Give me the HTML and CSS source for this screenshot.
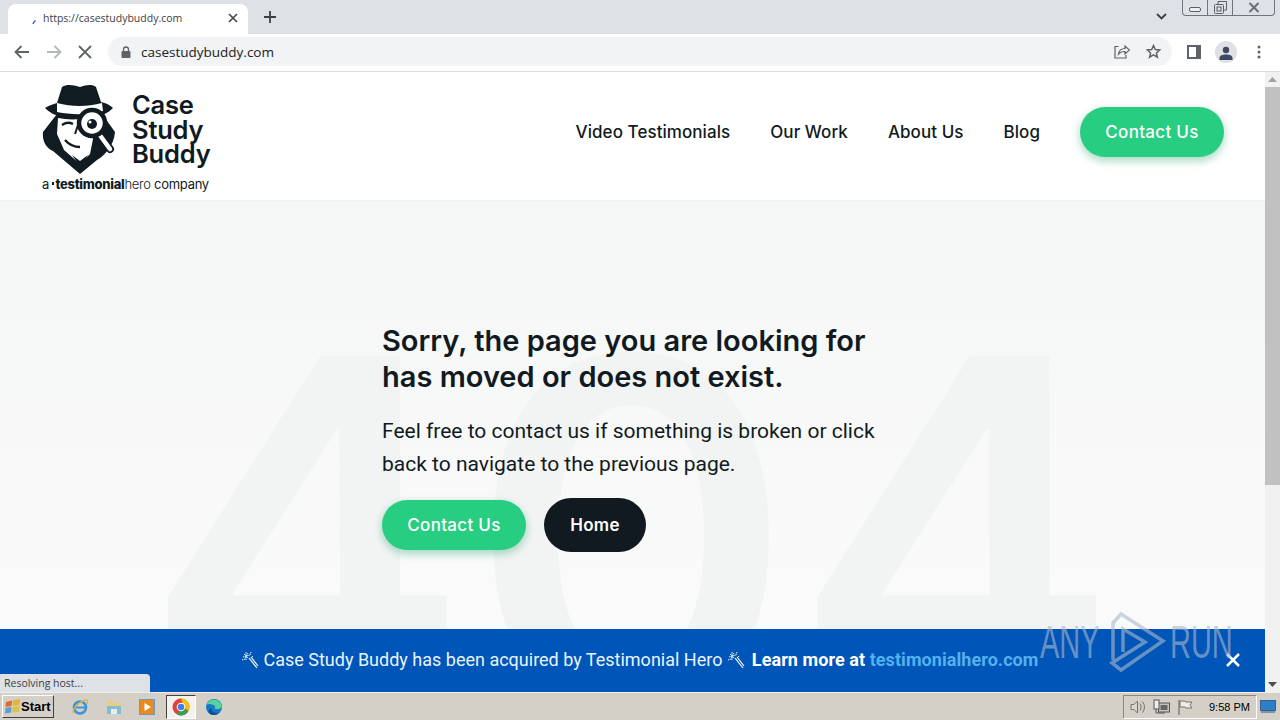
FILE: index.html
```html
<!DOCTYPE html>
<html lang="en">
<head>
    <meta charset="UTF-8">
    <meta name="viewport" content="width=device-width, initial-scale=1.0">
    <title>Case Study Buddy</title>
    <link rel="stylesheet" href="styles.css">
</head>
<body>
<div class="desktop">
    <!-- browser tabs -->
    <div class="tabstrip">
        <div class="tab">
            <svg class="tab-spinner" width="6" height="6" viewBox="0 0 6 6"><path d="M1 5 Q1.500 3 3.500 1.500" fill="none" stroke="#1a5fd0" stroke-width="1.300"/></svg>
            <span class="tab-title">https://casestudybuddy.com</span>
            <svg class="tab-close" width="10" height="10" viewBox="0 0 10 10"><path d="M1 1 9 9M9 1 1 9" stroke="#45484c" stroke-width="1.700"/></svg>
        </div>
        <svg class="new-tab" width="12" height="12" viewBox="0 0 12 12"><path d="M6 0v12M0 6h12" stroke="#3c4043" stroke-width="1.800"/></svg>
        <div class="strip-right">
            <svg class="tab-list" width="11" height="7" viewBox="0 0 11 7"><path d="M1 1 5.500 5.500 10 1" fill="none" stroke="#3c4043" stroke-width="1.800"/></svg>
            <div class="win-controls">
                <div class="win-btn win-min"><svg width="12" height="5" viewBox="0 0 12 5"><rect x=".5" y=".5" width="11" height="4" rx="1.500" fill="#eef0f3" stroke="#5b5f66"/></svg></div>
                <div class="win-btn win-max"><svg width="13" height="13" viewBox="0 0 13 13"><path d="M4 3V.5h8.500V9H10" fill="none" stroke="#5b5f66"/><rect x=".5" y="3.500" width="9" height="9" rx="1" fill="none" stroke="#5b5f66"/><rect x="3" y="6" width="4" height="4" fill="none" stroke="#5b5f66"/></svg></div>
                <div class="win-btn win-close"><svg width="12" height="11" viewBox="0 0 12 11"><path d="M1.500 1 10.500 10M10.500 1 1.500 10" stroke="#6a6e75" stroke-width="2"/></svg></div>
            </div>
        </div>
    </div>

    <!-- browser toolbar -->
    <div class="toolbar">
        <svg width="16" height="14" viewBox="0 0 16 14"><path d="M15 7H2M7.500 1 1.500 7l6 6" fill="none" stroke="#5f6368" stroke-width="1.800"/></svg>
        <svg width="16" height="14" viewBox="0 0 16 14"><path d="M1 7h13M8.500 1l6 6-6 6" fill="none" stroke="#b4b7bb" stroke-width="1.800"/></svg>
        <svg width="14" height="14" viewBox="0 0 14 14"><path d="M1 1 13 13M13 1 1 13" stroke="#5f6368" stroke-width="1.800"/></svg>
        <div class="omnibox">
            <svg width="10" height="12" viewBox="0 0 10 12"><path d="M2.500 5V3.500a2.500 2.500 0 0 1 5 0V5" fill="none" stroke="#5f6368" stroke-width="1.300"/><rect x="0.500" y="5" width="9" height="7" rx="1" fill="#5f6368"/></svg>
            <span class="omni-url">casestudybuddy.com</span>
            <div class="omni-actions">
                <svg width="16" height="15" viewBox="0 0 16 15"><path d="M4.500 2.500H1v11.500h11v-3M4.500 10c.5-3.500 3-5.500 6.500-5.500V2l4.500 4-4.500 4V7.500c-3 0-5 .8-6.500 2.500z" fill="none" stroke="#5f6368" stroke-width="1.200"/></svg>
                <svg width="15" height="15" viewBox="0 0 15 15"><path d="M7.500 1.500 9.300 5.600l4.400.4-3.300 2.900 1 4.300-3.900-2.300-3.900 2.300 1-4.300L1.300 6l4.400-.4z" fill="none" stroke="#5f6368" stroke-width="1.500"/></svg>
            </div>
        </div>
        <div class="toolbar-right">
            <svg width="14" height="14" viewBox="0 0 14 14"><rect x="1" y="1" width="12" height="12" fill="none" stroke="#5f6368" stroke-width="2"/><rect x="9" y="1" width="4" height="12" fill="#5f6368"/></svg>
            <div class="avatar"><svg width="14" height="14" viewBox="0 0 14 14"><circle cx="7" cy="4" r="3.200" fill="#3e4a63"/><path d="M0.500 14v-2c0-2.500 3-3.500 6.500-3.500s6.500 1 6.500 3.500v2z" fill="#3e4a63"/></svg></div>
            <svg class="menu-dots" width="4" height="14" viewBox="0 0 4 14"><circle cx="2" cy="2" r="1.500" fill="#5f6368"/><circle cx="2" cy="7" r="1.500" fill="#5f6368"/><circle cx="2" cy="12" r="1.500" fill="#5f6368"/></svg>
        </div>
    </div>

    <div class="viewport">
        <div class="page">
            <header class="site-header">
                <a class="logo">
                    <div class="logo-top">
                        <svg class="logo-mark" width="76" height="92" viewBox="0 0 76 92">
                            <!-- coat -->
                            <path d="M15 30 1 48C0 57 4 64 11 67L38 90 55 76C62 72 72 62 73 48L60 30Z" fill="#111b22"/>
                            <!-- hat -->
                            <path d="M3 24C8 21 12 20 15 19L20 3C25 0 31 1 38 3 44 1 50 0 54 3L59 18C64 19 68 21 71 24 66 29 60 32 52 33H22C13 32 7 28 3 24Z" fill="#111b22"/>
                            <path d="M15 19C30 23 45 23 60 19L61 27C46 31 30 31 15 28Z" fill="#fff"/>
                            <!-- face -->
                            <path d="M16 34C26 36 38 36 48 33L51 55 48 70 38 80 22 66 15 50Z" fill="#fff"/>
                            <path d="M20 41q5-4 11-1" fill="none" stroke="#111b22" stroke-width="2.400"/>
                            <path d="M23 56q6 7 15 7" fill="none" stroke="#111b22" stroke-width="2.400"/>
                            <path d="M33 50 36 41" fill="none" stroke="#111b22" stroke-width="2"/>
                            <path d="M30 71 38 77 46 71 41 80 38 82Z" fill="#111b22"/>
                            <!-- magnifier -->
                            <path d="M57 50 68 65" stroke="#111b22" stroke-width="8" stroke-linecap="round"/>
                            <path d="M57 50 68 65" stroke="#fff" stroke-width="4.500" stroke-linecap="round"/>
                            <circle cx="50" cy="39" r="13" fill="#fff" stroke="#111b22" stroke-width="4.500"/>
                            <circle cx="50" cy="40" r="5" fill="#111b22"/>
                            <circle cx="48" cy="38" r="1.500" fill="#fff"/>
                        </svg>
                        <div class="logo-name">Case<br>Study<br>Buddy</div>
                    </div>
                    <div class="logo-tag">a <span class="logo-tick"></span><b>testimonial</b><span class="logo-hero">hero</span> company</div>
                </a>
                <nav class="site-nav">
                    <a>Video Testimonials</a>
                    <a>Our Work</a>
                    <a>About Us</a>
                    <a>Blog</a>
                    <a class="btn btn-green nav-cta">Contact Us</a>
                </nav>
            </header>

            <main class="not-found">
                <div class="big-404" aria-hidden="true">404</div>
                <div class="message">
                    <h1>Sorry, the page you are looking for has moved or does not exist.</h1>
                    <p>Feel free to contact us if something is broken or click back to navigate to the previous page.</p>
                    <div class="actions">
                        <a class="btn btn-green">Contact Us</a>
                        <a class="btn btn-dark">Home</a>
                    </div>
                </div>
            </main>

            <div class="banner">
                <span class="banner-text"><svg class="wand" width="18" height="18" viewBox="0 0 18 18"><path d="M8 7 16 17M10 6 17 15" stroke="#fff" stroke-width="1.200"/><path d="M3 3 7 7M7 2 4 8M2 6 9 4M5 1v8M10 1 9 4M1 9 4 8M12 5 10 7" stroke="#eef5ff" stroke-width="1" stroke-dasharray="1.500 .7"/></svg> Case Study Buddy has been acquired by Testimonial Hero <svg class="wand" width="18" height="18" viewBox="0 0 18 18"><path d="M8 7 16 17M10 6 17 15" stroke="#fff" stroke-width="1.200"/><path d="M3 3 7 7M7 2 4 8M2 6 9 4M5 1v8M10 1 9 4M1 9 4 8M12 5 10 7" stroke="#eef5ff" stroke-width="1" stroke-dasharray="1.500 .7"/></svg>&nbsp; <b>Learn more at <span class="banner-link">testimonialhero.com</span></b></span>
                <svg class="banner-close" width="16" height="16" viewBox="0 0 16 16"><path d="M2 2 14 14M14 2 2 14" stroke="#fff" stroke-width="2.500"/></svg>
            </div>

            <div class="status-bubble">Resolving host...</div>
        </div>

        <div class="scrollbar">
            <div class="scroll-arrow"><svg width="9" height="5" viewBox="0 0 9 5"><path d="M4.500 0 9 5H0z" fill="#a3a3a3"/></svg></div>
            <div class="scroll-track"><div class="scroll-thumb"></div></div>
            <div class="scroll-arrow"><svg width="9" height="5" viewBox="0 0 9 5"><path d="M0 0h9L4.500 5z" fill="#505050"/></svg></div>
        </div>
    </div>

    <!-- windows taskbar -->
    <div class="taskbar">
        <div class="start-btn">
            <svg width="16" height="15" viewBox="0 0 16 15"><path d="M1 3 7 1.500 6.500 7 .5 8z" fill="#e4672a"/><path d="M8 1.300 15 0 14.500 6 7.500 7z" fill="#e8b23a"/><path d="M.5 9 6.500 8 6 13.500 0 14.500z" fill="#5a9bd8"/><path d="M7.500 8 14.500 7 14 13 7 13.500z" fill="#d8c24a"/></svg>
            <span>Start</span>
        </div>
        <div class="quick-launch">
            <div class="task-icon"><svg width="18" height="18" viewBox="0 0 18 18"><circle cx="9" cy="9.500" r="6" fill="none" stroke="#3d94d8" stroke-width="2.600"/><path d="M4 9.500h10" stroke="#3d94d8" stroke-width="2"/><path d="M2 15C1 12 8 3 15 2c2 0 2 2 1 4" fill="none" stroke="#e3b341" stroke-width="1.300"/></svg></div>
            <div class="task-icon"><svg width="18" height="18" viewBox="0 0 18 18"><path d="M2 3h5l1 2h8v11H2z" fill="#e8cf7e"/><path d="M2 8h14v8H2z" fill="#85bdd0"/><rect x="6" y="11" width="6" height="5" fill="#e6eef0"/></svg></div>
            <div class="task-icon"><svg width="16" height="16" viewBox="0 0 16 16"><rect x=".5" y=".5" width="15" height="15" fill="#e88a1f" stroke="#6c9ac4"/><path d="M5.500 4 12 8l-6.500 4z" fill="#fff"/></svg></div>
            <div class="task-icon task-active"><svg width="18" height="18" viewBox="0 0 18 18"><circle cx="9" cy="9" r="8.500" fill="#e0433a"/><path d="M9 9 16.400 13.300A8.500 8.500 0 0 1 5 16.500z" fill="#37a04f"/><path d="M9 .5A8.500 8.500 0 0 1 16.400 13.300L12 9z" fill="#f6c20d"/><circle cx="9" cy="9" r="4.300" fill="#fff"/><circle cx="9" cy="9" r="3.300" fill="#3f7fe8"/></svg></div>
            <div class="task-icon"><svg width="18" height="18" viewBox="0 0 18 18"><circle cx="9" cy="9" r="8" fill="#1478c8"/><path d="M1.500 7C3 1 14 -1 16.800 8c.3 2.500-3 3.500-6 3-1.800-.3-1-2-.3-2.500C8 6 3.500 5 1.500 7z" fill="#57d29a"/><path d="M6 10c0 3 4 6 8 4.500-3 3.500-8 3-10 .5C3 13 4 11 6 10z" fill="#0c4f96"/></svg></div>
        </div>
        <div class="tray">
            <svg width="16" height="14" viewBox="0 0 16 14"><path d="M1 4.500h3L7.500 1v12L4 9.500H1z" fill="#d8d4ce" stroke="#77746e"/><path d="M10 3.500q2.500 3.500 0 7M12.500 1.500q4 5.500 0 11" fill="none" stroke="#77746e"/></svg>
            <svg width="17" height="16" viewBox="0 0 17 16"><rect x="5.500" y="4" width="11" height="9" fill="#c8c4bc" stroke="#555"/><rect x="7.500" y="6" width="7" height="5" fill="#666"/><rect x="1" y="1" width="5" height="9" fill="#eee" stroke="#555"/><path d="M3 10v4h9" fill="none" stroke="#555"/></svg>
            <svg width="16" height="16" viewBox="0 0 16 16"><path d="M2 1v15" stroke="#77746e" stroke-width="1.300"/><path d="M3 2h5l1 1h6l-2 3 2 3H9L8 8H3z" fill="#eeeae4" stroke="#77746e"/></svg>
            <span class="clock">9:58 PM</span>
        </div>
        <div class="show-desktop"><svg width="16" height="14" viewBox="0 0 16 14"><rect x=".5" y=".5" width="15" height="10" fill="#2e7fc9" stroke="#3d5f86"/><rect x="1" y="11" width="14" height="2" fill="#7d93ad"/></svg></div>
    </div>

    <!-- watermark over the capture -->
    <div class="watermark">
        <span class="wm-any">ANY</span>
        <svg class="wm-play" width="58" height="64" viewBox="0 0 58 64"><path d="M5 50V13L13 4 55 31 13 60 4 53 37 32 15 19V42" fill="none" stroke="currentColor" stroke-width="3.500"/></svg>
        <span class="wm-run">RUN</span>
    </div>
</div>
</body>
</html>
```

FILE: styles.css
```css
:root {
    --chrome-grey: #dee1e6;
    --ink: #111a21;
    --green: #27cd80;
    --banner: #0055b8;
}
* {
    box-sizing: border-box;
}
html, body {
    margin: 0;
    height: 100%;
    overflow: hidden;
}
body {
    font-family: 'Inter', 'Liberation Sans', sans-serif;
    color: var(--ink);
    background: #fff;
}
.desktop {
    position: relative;
    display: flex;
    flex-direction: column;
    width: 1280px;
    height: 720px;
    overflow: hidden;
}

/* tab strip */
.tabstrip {
    display: flex;
    align-items: flex-end;
    height: 34px;
    flex: none;
    padding-left: 8px;
    background: var(--chrome-grey);
}
.tab {
    display: flex;
    align-items: center;
    width: 240px;
    height: 30px;
    padding: 0 10px 2px 24px;
    background: #fff;
    border-radius: 8px 8px 0 0;
}
.tab-spinner {
    margin-right: 5px;
    margin-top: 8px;
}
.tab-title {
    flex: 1;
    font-family: 'Open Sans', sans-serif;
    font-size: 10.5px;
    color: #3c4043;
    white-space: nowrap;
}
.new-tab {
    margin: 0 0 11px 16px;
}
.strip-right {
    display: flex;
    align-items: flex-start;
    align-self: flex-start;
    margin-left: auto;
    padding-right: 5px;
}
.tab-list {
    margin: 13px 15px 0 0;
}
.win-controls {
    display: flex;
    height: 16px;
    border: 1px solid #70747b;
    border-top: none;
    border-radius: 0 0 4px 4px;
}
.win-btn {
    display: flex;
    align-items: center;
    justify-content: center;
    height: 15px;
    overflow: hidden;
}
.win-min { width: 25px; border-right: 1px solid #70747b; padding-top: 4px; }
.win-max { width: 25px; border-right: 1px solid #70747b; }
.win-close { width: 41px; }

/* toolbar */
.toolbar {
    display: flex;
    align-items: center;
    gap: 16px;
    flex: none;
    height: 38px;
    padding: 0 14px 2px;
    background: #fff;
    border-bottom: 1px solid #dadce0;
}
.omnibox {
    display: flex;
    align-items: center;
    width: 1064px;
    height: 29px;
    padding: 0 11px 0 13px;
    background: #f1f3f4;
    border-radius: 15px;
}
.omni-url {
    margin-left: 10px;
    font-family: 'Open Sans', sans-serif;
    font-size: 13.5px;
    color: #202124;
}
.omni-actions {
    display: flex;
    gap: 16px;
    margin-left: auto;
}
.toolbar-right {
    display: flex;
    align-items: center;
    gap: 14px;
    margin-left: -1px;
}
.menu-dots {
    margin-left: 6px;
}
.avatar {
    display: flex;
    align-items: flex-end;
    justify-content: center;
    width: 22px;
    height: 22px;
    padding-bottom: 3px;
    background: #dfe1e5;
    border-radius: 50%;
}

/* page */
.viewport {
    display: flex;
    flex: 1;
    min-height: 0;
}
.page {
    position: relative;
    display: flex;
    flex-direction: column;
    flex: 1;
    min-width: 0;
    overflow: hidden;
}
.site-header {
    display: flex;
    align-items: center;
    justify-content: space-between;
    flex: none;
    height: 129px;
    padding: 0 41px 0 42px;
    background: #fff;
    border-bottom: 1px solid #f0f1f1;
}
.logo {
    display: flex;
    flex-direction: column;
    padding-top: 3px;
}
.logo-top {
    display: flex;
    align-items: center;
    gap: 14px;
}
.logo-name {
    padding-top: 1px;
    font-size: 25.5px;
    font-weight: 600;
    line-height: 24.500px;
    letter-spacing: -.2px;
}
.logo-tag {
    margin-top: 1px;
    font-size: 13px;
    line-height: 15px;
    white-space: nowrap;
    letter-spacing: -.28px;
}
.logo-tag b {
    font-weight: 800;
}
.logo-tick {
    display: inline-block;
    width: 2px;
    height: 3px;
    margin-right: 1px;
    vertical-align: 4px;
    background: var(--ink);
}
.logo-hero {
    font-weight: 300;
}
.site-nav {
    display: flex;
    align-items: center;
    gap: 40px;
    margin-bottom: 8px;
    font-size: 17px;
    font-weight: 500;
    letter-spacing: .06px;
}
.btn {
    display: flex;
    align-items: center;
    justify-content: center;
    font-size: 17px;
    font-weight: 500;
    border-radius: 27px;
    letter-spacing: .3px;
}
.btn-green {
    width: 144px;
    height: 50px;
    color: #fff;
    background: var(--green);
    box-shadow: 0 4px 10px rgba(39, 205, 128, .3), 0 3px 8px rgba(0, 0, 0, .12);
}
.btn-dark {
    width: 102px;
    height: 54px;
    color: #fff;
    font-weight: 600;
    background: var(--ink);
}

/* 404 section */
.not-found {
    position: relative;
    flex: 1;
    min-height: 0;
    padding: 122px 0 0 382px;
    background: linear-gradient(#f5f6f6, #fbfbfb);
    overflow: hidden;
}
.big-404 {
    position: absolute;
    top: 88px;
    left: 142px;
    width: 950px;
    font-size: 493px;
    font-weight: 600;
    line-height: 1;
    color: #f2f4f4;
    letter-spacing: -2px;
    white-space: nowrap;
}
.message {
    position: relative;
    width: 510px;
}
h1 {
    margin: 0 0 20px;
    font-size: 29px;
    font-weight: 600;
    line-height: 36px;
}
p {
    margin: 0 0 17px;
    font-family: 'Roboto', sans-serif;
    font-size: 21px;
    line-height: 33px;
}
.actions {
    display: flex;
    align-items: center;
    gap: 18px;
}

/* acquisition banner */
.banner {
    position: absolute;
    left: 0;
    right: 0;
    bottom: 0;
    display: flex;
    align-items: center;
    height: 63px;
    padding: 0 0 2px 241px;
    background: var(--banner);
    color: #e8f4ff;
    font-family: 'Roboto', sans-serif;
    font-size: 18px;
}
.banner-text {
    white-space: nowrap;
}
.banner-text b {
    margin-left: -2px;
    font-weight: 700;
    color: #fff;
    letter-spacing: .07px;
}
.banner-link {
    color: #55b1ee;
}
.wand {
    vertical-align: -3px;
}
.banner-close {
    position: absolute;
    top: 23px;
    right: 24px;
}
.status-bubble {
    position: absolute;
    left: 0;
    bottom: 0;
    width: 150px;
    height: 18px;
    padding: 2px 4px;
    font-family: 'Open Sans', sans-serif;
    font-size: 10.500px;
    line-height: 14px;
    color: #3c4043;
    background: #dee1e6;
    border-top-right-radius: 4px;
}

/* scrollbar */
.scrollbar {
    display: flex;
    flex-direction: column;
    flex: none;
    width: 15px;
    background: #f1f1f1;
}
.scroll-arrow {
    display: flex;
    align-items: center;
    justify-content: center;
    height: 15px;
}
.scroll-track {
    flex: 1;
}
.scroll-thumb {
    height: 398px;
    background: #c1c1c1;
}

/* taskbar */
.taskbar {
    display: flex;
    align-items: center;
    flex: none;
    height: 28px;
    background: #d4d0c8;
    border-top: 1px solid #f0eee9;
}
.start-btn {
    display: flex;
    align-items: center;
    gap: 0;
    width: 52px;
    height: 23px;
    margin-left: 2px;
    padding-left: 2px;
    font-family: 'Liberation Sans', sans-serif;
    font-size: 13px;
    font-weight: 700;
    color: #000;
    background: #d4d0c8;
    border: 1px solid;
    border-color: #fff #404040 #404040 #fff;
}
.quick-launch {
    display: flex;
    align-items: center;
    gap: 3.5px;
    margin-left: 11px;
}
.task-icon {
    display: flex;
    align-items: center;
    justify-content: center;
    width: 30px;
    height: 24px;
}
.task-active {
    background: #f4f2ee;
    border: 1px solid;
    border-color: #404040 #fff #fff #404040;
}
.tray {
    display: flex;
    align-items: center;
    gap: 7px;
    width: 134px;
    height: 24px;
    margin-left: auto;
    padding-left: 6px;
    border: 1px solid;
    border-color: #8a8780 #fff #fff #8a8780;
}
.clock {
    margin-left: 9px;
    font-family: 'Liberation Sans', sans-serif;
    font-size: 11px;
    color: #000;
}
.show-desktop {
    display: flex;
    align-items: center;
    width: 23px;
    padding-left: 3px;
}

/* watermark */
.watermark {
    position: absolute;
    top: 610px;
    left: 1040px;
    display: flex;
    align-items: center;
    height: 64px;
    opacity: .6;
    color: #aab9cd;
    font-family: 'Liberation Sans', sans-serif;
    font-size: 46px;
    pointer-events: none;
}
.wm-any, .wm-run {
    width: 62px;
    transform: scaleX(.63);
    transform-origin: left center;
}
.wm-play {
    flex: none;
    margin: 0 4px 0 6px;
}
```
